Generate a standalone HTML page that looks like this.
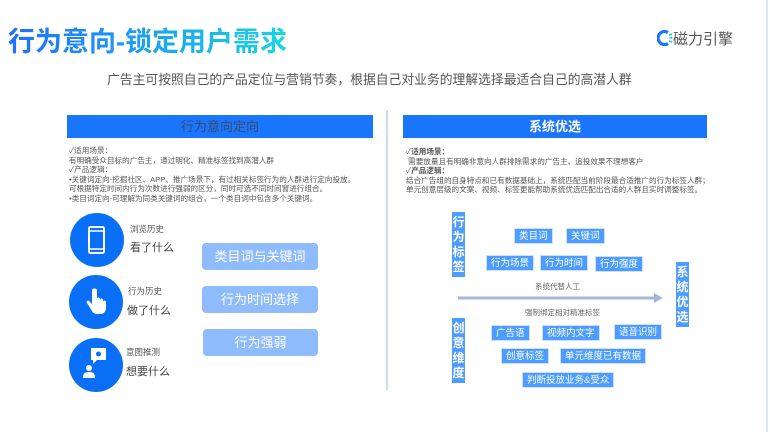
<!DOCTYPE html>
<html><head><meta charset="utf-8"><style>
*{margin:0;padding:0;box-sizing:border-box}
body{width:770px;height:432px;background:#fff;position:relative;overflow:hidden;font-family:"Liberation Sans","Noto Sans CJK SC",sans-serif;color:#555}
.a{position:absolute;white-space:nowrap}
.title{left:8px;top:20px;font-size:27px;font-weight:bold;background:linear-gradient(90deg,#1f6fff,#19d6e0);-webkit-background-clip:text;background-clip:text;color:transparent;letter-spacing:0px}
.hdr{position:absolute;background:#1a75ff;height:23px;text-align:center;font-size:13px;line-height:23px}
.txt{position:absolute;font-size:7.6px;line-height:9.6px;color:#555}
.circ{position:absolute;width:54px;height:54px;border-radius:50%;background:#0a6ff7}
.btn{position:absolute;left:202px;width:116px;height:27px;background:#8ebcff;border-radius:4px;color:#fff;font-size:13px;text-align:center;line-height:27px}
.chip{position:absolute;background:#4d9cff;color:#fff;font-size:9.5px;height:16px;line-height:16px;padding:0 4px;border:1px solid #cfe0ff}
.vl{position:absolute;background:#4d9cff;color:#fff;font-size:12px;font-weight:bold;width:13px;line-height:15px;text-align:center;padding:3px 0}
</style></head><body>
<div class="a title">行为意向-锁定用户需求</div>
<svg class="a" style="left:657px;top:29px" width="16" height="18" viewBox="0 0 16 18"><path d="M11 3.5A6.5 6.5 0 1 0 11 14.5" stroke="#1a75ff" stroke-width="3.2" fill="none"/><g stroke="#19c6e6" stroke-width="1.6"><line x1="12" y1="6" x2="15" y2="5"/><line x1="12.5" y1="9" x2="15.5" y2="9"/><line x1="12" y1="12" x2="15" y2="13"/></g></svg>
<div class="a" style="left:673px;top:28px;font-size:15px;color:#555">磁力引擎</div>
<div class="a" style="left:107px;top:69px;font-size:12.8px;color:#555">广告主可按照自己的产品定位与营销节奏，根据自己对业务的理解选择最适合自己的高潜人群</div>
<div class="a" style="left:766px;top:0;width:2px;height:432px;background:#d8e8f8"></div>
<div class="a" style="left:386px;top:110px;width:2px;height:280px;background:#c8dcf5"></div>

<div class="hdr" style="left:67px;top:115px;width:306px;color:#3a4a6a">行为意向定向</div>
<div class="txt" style="left:69px;top:146px">✓适用场景：<br>有明确受众目标的广告主，通过明化、精准标签找到高潜人群<br>✓产品逻辑：<br>•关键词定向-挖掘社区、APP、推广场景下，有过相关标签行为的人群进行定向投放。<br>可根据特定时间内行为次数进行强弱的区分，同时可选不同时间窗进行组合。<br>•类目词定向-可理解为同类关键词的组合，一个类目词中包含多个关键词。</div>

<div class="circ" style="left:70px;top:213px"></div>
<svg class="a" style="left:87px;top:225px" width="20" height="30"><rect x="2" y="2" width="15" height="26" rx="1.5" fill="none" stroke="#fff" stroke-width="2"/><line x1="2" y1="6" x2="17" y2="6" stroke="#fff" stroke-width="1.5"/><line x1="2" y1="24" x2="17" y2="24" stroke="#fff" stroke-width="1.5"/></svg>
<div class="circ" style="left:69px;top:275px"></div>
<svg class="a" style="left:84px;top:288px" width="24" height="28"><path d="M8 2v14l-3-3c-2-1-3 1-2 2l5 8c1 2 3 3 6 3h3c3 0 5-3 5-6v-6c0-2-3-2-3 0v-2c0-2-3-2-3 0v-1c0-2-3-2-3 0V2c0-2-5-2-5 0z" fill="#fff"/></svg>
<div class="circ" style="left:69px;top:338px"></div>
<svg class="a" style="left:82px;top:345px" width="30" height="36"><rect x="9" y="3" width="15" height="12" fill="#fff"/><path d="M11 15l0 4 4-4z" fill="#fff"/><circle cx="16.5" cy="9" r="2.5" fill="#0a6ff7"/><circle cx="7" cy="23" r="3" fill="#fff"/><path d="M1 33c0-5 2-6 6-6s6 1 6 6z" fill="#fff"/></svg>
<div class="a" style="left:130px;top:223px;font-size:8.5px;color:#555">浏览历史</div>
<div class="a" style="left:130px;top:239px;font-size:11px;color:#444">看了什么</div>
<div class="a" style="left:128px;top:285px;font-size:8.5px;color:#555">行为历史</div>
<div class="a" style="left:127px;top:302px;font-size:11px;color:#444">做了什么</div>
<div class="a" style="left:126px;top:346px;font-size:8.5px;color:#555">意图推测</div>
<div class="a" style="left:126px;top:363px;font-size:11px;color:#444">想要什么</div>
<div class="btn" style="top:243px">类目词与关键词</div>
<div class="btn" style="top:286px">行为时间选择</div>
<div class="btn" style="left:203px;top:329px;width:115px">行为强弱</div>

<div class="hdr" style="left:403px;top:115px;width:304px;color:#fff;font-weight:bold">系统优选</div>
<div class="txt" style="left:406px;top:147px">✓<b>适用场景：</b><br>&nbsp;需要放量且有明确非意向人群排除需求的广告主、追投效果不理想客户<br>✓<b>产品逻辑：</b><br>结合广告组的自身特点和已有数据基础上，系统匹配当前阶段最合适推广的行为标签人群；<br>单元创意层级的文案、视频、标签更能帮助系统优选匹配出合适的人群且实时调整标签。</div>

<div class="vl" style="left:452px;top:212px;height:65px">行为标签</div>
<div class="vl" style="left:452px;top:318px;height:65px">创意维度</div>
<div class="vl" style="left:676px;top:262px;height:65px">系统优选</div>
<div class="chip" style="left:514px;top:228px">类目词</div>
<div class="chip" style="left:566px;top:228px">关键词</div>
<div class="chip" style="left:486px;top:255px">行为场景</div>
<div class="chip" style="left:540px;top:255px">行为时间</div>
<div class="chip" style="left:595px;top:256px">行为强度</div>
<div class="a" style="left:535px;top:281px;font-size:7.5px;color:#666">系统代替人工</div>
<svg class="a" style="left:456px;top:292px" width="210" height="12"><line x1="2" y1="6" x2="200" y2="6" stroke="#a9b6d8" stroke-width="3"/><path d="M198 1l9 5-9 5z" fill="#a9b6d8"/></svg>
<div class="a" style="left:525px;top:307px;font-size:7.5px;color:#666">强制绑定相对精准标签</div>
<div class="chip" style="left:491px;top:325px">广告语</div>
<div class="chip" style="left:542px;top:325px">视频内文字</div>
<div class="chip" style="left:614px;top:324px">语音识别</div>
<div class="chip" style="left:501px;top:348px">创意标签</div>
<div class="chip" style="left:560px;top:348px">单元维度已有数据</div>
<div class="chip" style="left:522px;top:372px">判断投放业务&amp;受众</div>
</body></html>
